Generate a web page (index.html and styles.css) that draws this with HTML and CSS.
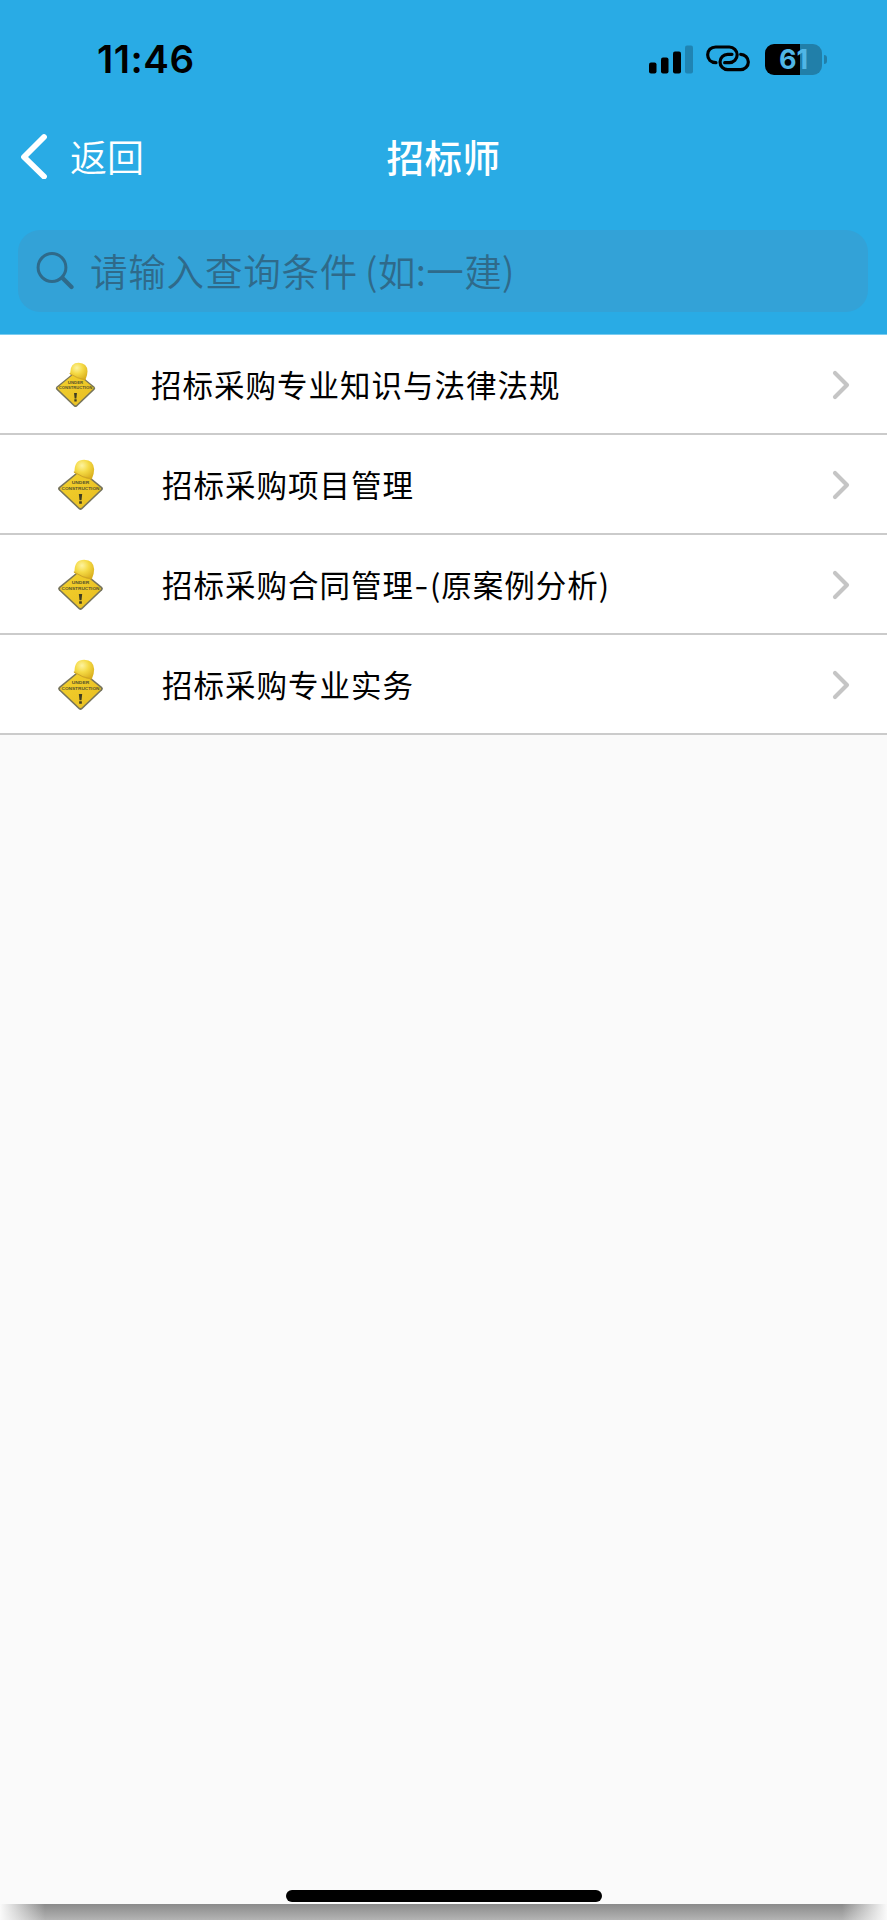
FILE: index.html
```
<!DOCTYPE html>
<html lang="zh-CN">
<head>
	<title>招标师</title>
	<meta charset="utf-8">
	<link rel="stylesheet" href="styles.css">
</head>
<body>
	<!-- 公用图标 -->
	<svg class="defs" width="0" height="0">
		<defs>
			<radialGradient id="hat" cx="0.4" cy="0.3" r="0.75">
				<stop offset="0" stop-color="#fdf3a0"/>
				<stop offset="0.45" stop-color="#f5da45"/>
				<stop offset="1" stop-color="#d9ae1c"/>
			</radialGradient>
			<linearGradient id="board" x1="0" y1="0" x2="1" y2="1">
				<stop offset="0" stop-color="#f3d22d"/>
				<stop offset="1" stop-color="#e8bd22"/>
			</linearGradient>
		</defs>
		<symbol id="sign" viewBox="82 56 140 156">
			<path d="M147 91q5-4 10 0l60 49q5 5 0 10l-60 57q-5 4-10 0l-60-57q-5-5 0-10z" fill="#77745a"/>
			<path d="M149 95q3-2 6 0l57 47q3 3 0 6l-57 54q-3 2-6 0l-57-54q-3-3 0-6z" fill="url(#board)"/>
			<path d="M134 92q0-34 29-34 29 1 30 29 0 14-7 29-10 3-27-5-20-8-27-15z" fill="url(#hat)"/>
			<path d="M132 95q27 18 55 21" fill="none" stroke="#cfa526" stroke-width="3"/>
			<text class="sign-text" x="152" y="132" textLength="52" lengthAdjust="spacingAndGlyphs">UNDER</text>
			<text class="sign-text" x="152" y="149" textLength="114" lengthAdjust="spacingAndGlyphs">CONSTRUCTION</text>
			<path d="M147 161h10l-2 19h-6zM148 183h8v7h-8z" fill="#3f3d22"/>
		</symbol>
		<symbol id="arrow" viewBox="0 0 18 30">
			<path d="M3 3l12 12L3 27" fill="none" stroke="#c5c5c5" stroke-width="4.200" stroke-linecap="round" stroke-linejoin="round"/>
		</symbol>
	</svg>

	<div id="header">
		<div class="status">
			<span class="time">11:46</span>
			<div class="state">
				<svg class="signal" width="45" height="29" viewBox="0 0 45 29">
					<rect x="0" y="17.500" width="7.500" height="11" rx="2"/>
					<rect x="12" y="12.500" width="7.500" height="16" rx="2"/>
					<rect x="24" y="6.500" width="8" height="22" rx="2"/>
					<rect x="36" y="0.500" width="8" height="28" rx="2" fill="#1f84b3"/>
				</svg>
				<svg class="link" width="45" height="28" viewBox="228 48 135 84">
					<path d="M258 101C242 101 233 91 233 77.500S243 54 257 54H298A23.500 23.500 0 0 1 298 101H284"/>
					<path d="M332 76A23 23 0 0 1 332 122H293A23 23 0 0 1 293 76H306"/>
				</svg>
				<div class="battery"><span>61</span></div>
				<i class="nub"></i>
			</div>
		</div>
		<div class="nav">
			<a class="back">
				<svg width="28" height="46" viewBox="0 0 28 46">
					<path d="M25 4L5 24 25 43.500" fill="none" stroke="#fff" stroke-width="5.800" stroke-linecap="round" stroke-linejoin="round"/>
				</svg>
				<span>返回</span>
			</a>
			<h1>招标师</h1>
		</div>
		<div class="search">
			<svg width="38" height="40" viewBox="0 0 38 40">
				<circle cx="16" cy="16.500" r="13.900" fill="none" stroke="#2f6a8a" stroke-width="3"/>
				<path d="M26.500 27L35.500 36" stroke="#2f6a8a" stroke-width="4.200" stroke-linecap="round"/>
			</svg>
			<span>请输入查询条件<em>(如:一建)</em></span>
		</div>
	</div>

	<ul id="list">
		<li class="first">
			<svg class="icon"><use href="#sign"/></svg>
			<span>招标采购专业知识与法律法规</span>
			<svg class="arrow"><use href="#arrow"/></svg>
		</li>
		<li>
			<svg class="icon"><use href="#sign"/></svg>
			<span>招标采购项目管理</span>
			<svg class="arrow"><use href="#arrow"/></svg>
		</li>
		<li>
			<svg class="icon"><use href="#sign"/></svg>
			<span>招标采购合同管理<b>-</b>(原案例分析)</span>
			<svg class="arrow"><use href="#arrow"/></svg>
		</li>
		<li>
			<svg class="icon"><use href="#sign"/></svg>
			<span>招标采购专业实务</span>
			<svg class="arrow"><use href="#arrow"/></svg>
		</li>
	</ul>

	<div id="home"></div>
	<div id="shadow"></div>
</body>
</html>
```
FILE: styles.css
```
*{
	box-sizing: border-box;
}
body{
	display: flex;
	flex-direction: column;
	margin: 0;
	height: 1920px;
	overflow: hidden;
	background: #fafafa;
	font-family: "Noto Sans CJK SC", sans-serif;
}
.defs{
	position: absolute;
}
.sign-text{
	font: 700 12.500px "Liberation Sans", sans-serif;
	letter-spacing: 0;
	text-anchor: middle;
	fill: #55522c;
}
#header{
	height: 335px;
	background: #29abe5;
	border-bottom: 1px solid #7accf0;
}
.status{
	display: flex;
	justify-content: space-between;
	height: 110px;
	padding: 0 60px 0 97px;
}
.time{
	margin-top: 35px;
	font: 600 38.500px/48px Inter, sans-serif;
	letter-spacing: 0.500px;
	color: #000;
}
.state{
	display: flex;
	align-items: center;
	height: 32px;
	margin-top: 43px;
}
.link{
	margin-left: 12px;
}
.link path{
	fill: none;
	stroke: #000;
	stroke-width: 9.500;
	stroke-linecap: round;
}
.battery{
	width: 57px;
	height: 31px;
	margin-left: 14px;
	border-radius: 9px;
	background: linear-gradient(90deg, #000 35px, #217fa9 35px);
	font: 700 27px/31px Inter, sans-serif;
	text-align: center;
	color: #50b6e6;
}
.nub{
	width: 3px;
	height: 9px;
	margin-left: 2px;
	border-radius: 0 4px 4px 0;
	background: #217fa9;
}
.nav{
	display: grid;
	grid-template-columns: 1fr auto 1fr;
	align-items: center;
	height: 92px;
	padding: 0 18px;
	color: #fff;
}
.back{
	display: flex;
	align-items: center;
	gap: 23px;
	padding-left: 1px;
	font-size: 37px;
	font-weight: 350;
	line-height: 54px;
}
.nav h1{
	margin: 0;
	font-size: 37.500px;
	font-weight: 500;
	line-height: 54px;
	letter-spacing: 0.500px;
}
.search{
	display: flex;
	align-items: center;
	height: 82px;
	margin: 28px 19px 0 18px;
	padding-left: 18px;
	border-radius: 22px;
	background: #33a2d7;
	font-size: 37.500px;
	font-weight: 350;
	line-height: 52px;
	letter-spacing: 0.800px;
	color: #2f6a8a;
}
.search span{
	margin: -2px 0 0 16px;
}
.search em{
	margin-left: 7px;
	font-style: normal;
	letter-spacing: 0.400px;
}
#list{
	margin: 0;
	padding: 0;
	list-style-type: none;
}
#list li{
	display: flex;
	align-items: center;
	height: 100px;
	padding: 2px 37px 0 57px;
	border-bottom: 2px solid #cbcbcb;
	background: #fff;
	font-size: 30.500px;
	line-height: 44px;
	letter-spacing: 1px;
	color: #000;
}
#list span{
	margin-top: -2px;
}
#list b{
	display: inline-block;
	width: 16px;
	font-weight: 400;
	text-align: center;
	transform: scaleX(1.300);
}
#list .icon{
	width: 47px;
	height: 52px;
	margin-right: 58px;
}
#list .first{
	padding-left: 55px;
}
#list .first .icon{
	width: 41px;
	height: 46px;
	margin-right: 55px;
}
#list .arrow{
	width: 18px;
	height: 30px;
	margin-left: auto;
}
#home{
	width: 316px;
	height: 12px;
	margin: auto auto 2px 286px;
	border-radius: 6px;
	background: #000;
}
#shadow{
	flex: none;
	height: 16px;
	background: linear-gradient(90deg, #fafafa, rgba(250,250,250,0) 45px, rgba(250,250,250,0) 842px, #fafafa), linear-gradient(#8a8a8a, #b4b4b4);
}
```
